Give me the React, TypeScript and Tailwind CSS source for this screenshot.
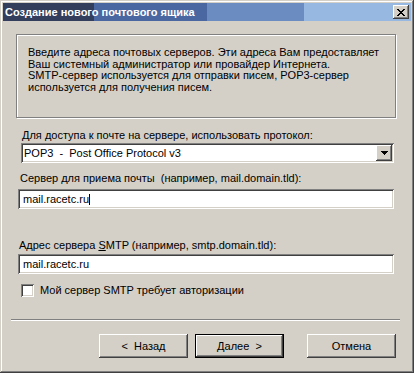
import { useState } from 'react';

const raised =
  'shadow-[inset_-1px_-1px_#404040,inset_1px_1px_#ffffff,inset_-2px_-2px_#808080,inset_2px_2px_#d4d0c8]';
const sunken =
  'shadow-[inset_1px_1px_#808080,inset_-1px_-1px_#ffffff,inset_2px_2px_#404040,inset_-2px_-2px_#d4d0c8]';

function CloseGlyph() {
  return (
    <svg width="8" height="7" viewBox="0 0 8 7" aria-hidden shapeRendering="crispEdges">
      <path d="M0 0h2v1h-2zM6 0h2v1h-2zM1 1h2v1h-2zM5 1h2v1h-2zM2 2h4v1h-4zM3 3h2v1h-2zM2 4h4v1h-4zM1 5h2v1h-2zM5 5h2v1h-2zM0 6h2v1h-2zM6 6h2v1h-2z" fill="#000" />
    </svg>
  );
}

function Arrow() {
  return (
    <svg width="7" height="4" viewBox="0 0 7 4" aria-hidden shapeRendering="crispEdges">
      <path d="M0 0h7v1h-7zM1 1h5v1h-5zM2 2h3v1h-3zM3 3h1v1h-1z" fill="#000" />
    </svg>
  );
}

function Button({ children, isDefault }: { children: React.ReactNode; isDefault?: boolean }) {
  if (isDefault) {
    return (
      <div className="w-[89px] h-[24px] border border-black">
        <div className={`w-full h-full flex items-center justify-center ${raised}`}>{children}</div>
      </div>
    );
  }
  return (
    <div className={`w-[89px] h-[24px] flex items-center justify-center ${raised}`}>{children}</div>
  );
}

export default function App() {
  const [checked, setChecked] = useState(false);

  return (
    <div
      className={`w-[414px] h-[373px] bg-[#d4d0c8] p-[3px] flex flex-col text-[11px] leading-[13px] text-black shadow-[inset_-1px_-1px_#404040,inset_1px_1px_#d4d0c8,inset_-2px_-2px_#808080,inset_2px_2px_#ffffff]`}
      style={{ fontFamily: '"Liberation Sans", Arial, sans-serif' }}
    >
      {/* title bar */}
      <div className="h-[18px] flex items-center justify-between pl-[2px] pr-[2px] bg-[linear-gradient(to_right,#323e5c_0px,#323e5c_91px,#4a67a1_91px,#4a67a1_204px,#6a8cc0_204px,#6a8cc0_301px,#97b8e0_301px,#97b8e0_100%)]">
        <span className="text-white font-bold">Создание нового почтового ящика</span>
        <div className={`w-[16px] h-[14px] bg-[#d4d0c8] flex items-center justify-center ${raised}`}>
          <CloseGlyph />
        </div>
      </div>

      <div className="flex flex-col">
        {/* info box */}
        <div className="mt-[13px] ml-[13px] w-[380px] h-[84px] border border-[#808080] shadow-[inset_1px_1px_#ffffff,1px_1px_#ffffff] pl-[11px] pt-[12px] leading-[11.7px]">
          Введите адреса почтовых серверов. Эти адреса Вам предоставляет
          <br />
          Ваш системный администратор или провайдер Интернета.
          <br />
          SMTP-сервер используется для отправки писем, POP3-сервер
          <br />
          используется для получения писем.
        </div>

        <div className="mt-[11px] ml-[19px]">Для доступа к почте на сервере, использовать протокол:</div>
        <div className={`mt-[1px] ml-[18px] w-[373px] h-[20px] bg-white flex items-center justify-between pl-[3px] pr-[2px] ${sunken}`}>
          <span>POP3&nbsp; -&nbsp; Post Office Protocol v3</span>
          <div className={`w-[16px] h-[16px] bg-[#d4d0c8] flex items-center justify-center ${raised}`}>
            <Arrow />
          </div>
        </div>

        <div className="mt-[9px] ml-[17px]">Сервер для приема почты&nbsp; (например, mail.domain.tld):</div>
        <div className={`mt-[4px] ml-[15px] w-[376px] h-[20px] bg-white flex items-center pl-[5px] ${sunken}`}>
          <span>mail.racetc.ru</span>
          <span className="inline-block w-px h-[11px] bg-black" />
        </div>

        <div className="mt-[30px] ml-[16px]">
          Адрес сервера <span className="underline">S</span>MTP (например, smtp.domain.tld):
        </div>
        <div className={`mt-[2px] ml-[15px] w-[376px] h-[20px] bg-white flex items-center pl-[5px] ${sunken}`}>
          <span>mail.racetc.ru</span>
        </div>

        <label className="mt-[10px] ml-[18px] flex items-center gap-[6px]">
          <span
            className={`w-[13px] h-[13px] bg-white ${sunken}`}
            onClick={() => setChecked(!checked)}
          />
          <span>Мой сервер SMTP требует авторизации</span>
        </label>

        {/* separator */}
        <div className="mt-[22px] ml-[8px] w-[389px] h-[2px] border-t border-[#808080] border-b border-b-white" />

        <div className="mt-[13px] ml-[96px] flex gap-[7px]">
          <Button>&lt;&nbsp; Назад</Button>
          <Button isDefault>Далее&nbsp; &gt;</Button>
          <div className="ml-[16px]">
            <Button>Отмена</Button>
          </div>
        </div>
      </div>
    </div>
  );
}
